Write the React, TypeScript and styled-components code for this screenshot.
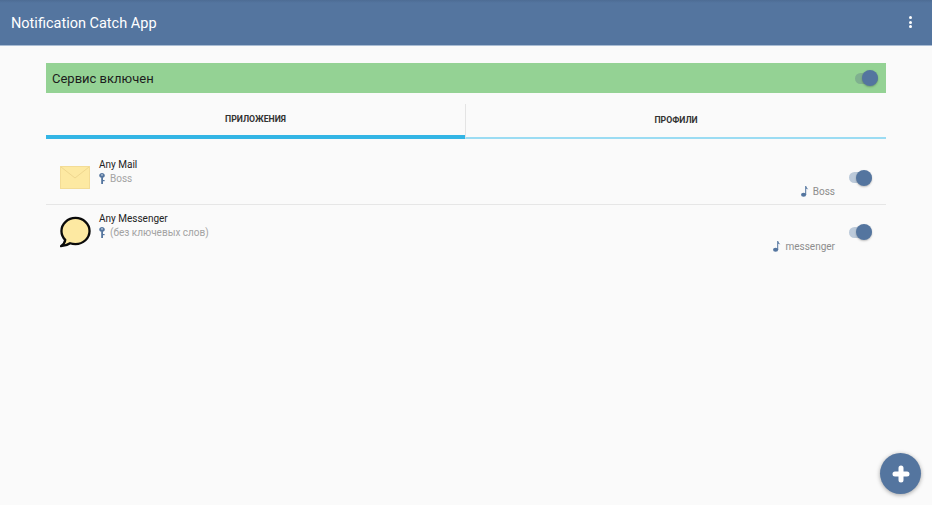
import React from 'react';
import styled, { createGlobalStyle } from 'styled-components';

const GlobalStyle = createGlobalStyle`
    html, body {
        margin: 0;
        padding: 0;
        background: #fafafa;
    }
    body {
        font-family: Roboto, "Noto Sans", sans-serif;
    }
`;

const Page = styled.div`
    position: relative;
    width: 932px;
    height: 505px;
    overflow: hidden;
    background: #fafafa;
`;

const AppBar = styled.header`
    height: 46px;
    box-sizing: border-box;
    padding: 1px 20px 0 11px;
    display: flex;
    align-items: center;
    justify-content: space-between;
    background: linear-gradient(#4d6c94 0, #54759f 3px);
    border-bottom: 1px solid #a9bcd3;
`;

const AppTitle = styled.h1`
    margin: 0;
    font-size: 14.5px;
    font-weight: 400;
    color: #fff;
`;

const MenuDots = styled.div`
    display: flex;
    flex-direction: column;
    gap: 1.5px;
    margin-top: -2px;

    span {
        width: 3px;
        height: 3px;
        border-radius: 50%;
        background: #fff;
    }
`;

const Content = styled.main`
    padding: 17px 46px 0;
`;

const ServiceBanner = styled.div`
    height: 30px;
    box-sizing: border-box;
    padding: 0 8px 0 6px;
    display: flex;
    align-items: center;
    justify-content: space-between;
    background: #94d294;
    font-size: 13px;
    color: #1d1d1d;
`;

const Tabs = styled.nav`
    margin-top: 11px;
    display: flex;
`;

interface TabProps {
    $active?: boolean;
}

const Tab = styled.div<TabProps>`
    flex: ${props => props.$active ? '0 0 419px' : '1'};
    height: 35px;
    box-sizing: border-box;
    padding-bottom: 2px;
    display: flex;
    align-items: center;
    justify-content: center;
    font-size: 8.7px;
    font-weight: 700;
    color: #333;
    border-bottom: ${props => props.$active ? '4px solid #33b5e5' : '2px solid #9bdcf3'};
    border-left: ${props => props.$active ? 'none' : '1px solid #e4e4e4'};
`;

const List = styled.div`
    margin-top: 12px;
`;

const Row = styled.div`
    height: 54px;
    box-sizing: border-box;
    padding: 0 14px;
    display: flex;
    align-items: center;
    gap: 8px;
    border-bottom: 1px solid #e6e6e6;

    &:last-child {
        border-bottom: none;
    }
`;

const IconBox = styled.div`
    width: 31px;
    height: 32px;
    display: flex;
    align-items: center;
    justify-content: flex-start;
`;

const RowText = styled.div`
    flex: 1;
    align-self: flex-start;
    padding-top: 7px;
`;

const RowName = styled.div`
    font-size: 10px;
    line-height: 13px;
    color: #222;
`;

const KeywordLine = styled.div`
    margin-top: 1px;
    display: flex;
    align-items: center;
    gap: 5px;
    font-size: 10px;
    line-height: 13px;
    color: #a3a3a3;
`;

const SoundLine = styled.div`
    align-self: flex-end;
    padding-bottom: 6px;
    margin-right: 6px;
    display: flex;
    align-items: center;
    gap: 4px;
    font-size: 10px;
    line-height: 13px;
    color: #8d8d8d;
`;

interface SwitchProps {
    $track?: string;
}

const Switch = styled.div<SwitchProps>`
    position: relative;
    width: 23px;
    height: 11px;
    border-radius: 6px;
    background: ${props => props.$track ? props.$track : '#bccada'};

    &::after {
        content: '';
        position: absolute;
        right: 0;
        top: -2.5px;
        width: 16px;
        height: 16px;
        border-radius: 50%;
        background: #54759f;
        box-shadow: 0 1px 2px rgba(0, 0, 0, 0.25);
    }
`;

const Fab = styled.button`
    position: absolute;
    left: 880px;
    top: 453px;
    width: 41px;
    height: 41px;
    padding: 0;
    border: none;
    border-radius: 50%;
    background: #54759f;
    box-shadow: 0 1px 4px rgba(0, 0, 0, 0.35);
    display: flex;
    align-items: center;
    justify-content: center;
`;

const MailIcon = () => (
    <svg width="30" height="23" viewBox="0 0 30 23">
        <rect x="0.5" y="0.5" width="29" height="22" fill="#fde9a2" stroke="#f3dc96" />
        <path d="M1 1 L15 12 L29 1" fill="none" stroke="#efd78f" strokeWidth="1" />
    </svg>
);

const BubbleIcon = () => (
    <svg width="32" height="32" viewBox="0 0 32 32">
        <path
            d="M16 1.5 C8 1.5 1.5 7.6 1.5 15 C1.5 18.6 3 21.8 5.4 24.2 C5.2 26.4 4 28.6 1 30.6 C4.8 30.4 8 29.4 10.4 27.6 C12.2 28.2 14 28.5 16 28.5 C24 28.5 30.5 22.4 30.5 15 C30.5 7.6 24 1.5 16 1.5 Z"
            fill="#fde9a2"
            stroke="#0a0a0a"
            strokeWidth="2.4"
            strokeLinejoin="round"
        />
    </svg>
);

const KeyIcon = () => (
    <svg width="6" height="11" viewBox="0 0 6 11">
        <path
            fillRule="evenodd"
            d="M3 0 C4.5 0 5.8 1 5.8 2.4 C5.8 3.5 5 4.3 4 4.6 L4 11 L2.2 11 L2.2 4.6 C1 4.3 0.2 3.5 0.2 2.4 C0.2 1 1.5 0 3 0 Z M3 1.2 C2.5 1.2 2.2 1.5 2.2 1.9 C2.2 2.3 2.5 2.6 3 2.6 C3.5 2.6 3.8 2.3 3.8 1.9 C3.8 1.5 3.5 1.2 3 1.2 Z"
            fill="#54759f"
        />
        <rect x="4" y="7" width="1.6" height="1.2" fill="#54759f" />
    </svg>
);

const NoteIcon = () => (
    <svg width="8" height="11" viewBox="0 0 8 11">
        <ellipse cx="2.6" cy="8.8" rx="2.6" ry="2" fill="#54759f" />
        <path d="M4.2 0 L5.2 0 C5.4 1.6 6.6 2.4 7.4 3.8 C6.8 3.2 6 2.9 5.2 2.8 L5.2 9 L4.2 9 Z" fill="#54759f" />
    </svg>
);

const PlusIcon = () => (
    <svg width="18" height="18" viewBox="0 0 18 18">
        <path d="M9 3 V15 M3 9 H15" stroke="#fff" strokeWidth="5" strokeLinecap="round" />
    </svg>
);

const rows = [
    { name: 'Any Mail', keywords: 'Boss', sound: 'Boss', icon: <MailIcon /> },
    { name: 'Any Messenger', keywords: '(без ключевых слов)', sound: 'messenger', icon: <BubbleIcon /> },
];

export default function App() {
    return (
        <Page>
            <GlobalStyle />
            <AppBar>
                <AppTitle>Notification Catch App</AppTitle>
                <MenuDots>
                    <span />
                    <span />
                    <span />
                </MenuDots>
            </AppBar>
            <Content>
                <ServiceBanner>
                    Сервис включен
                    <Switch $track="#7fb08f" />
                </ServiceBanner>
                <Tabs>
                    <Tab $active>ПРИЛОЖЕНИЯ</Tab>
                    <Tab>ПРОФИЛИ</Tab>
                </Tabs>
                <List>
                    {rows.map(row => (
                        <Row key={row.name}>
                            <IconBox>{row.icon}</IconBox>
                            <RowText>
                                <RowName>{row.name}</RowName>
                                <KeywordLine>
                                    <KeyIcon />
                                    {row.keywords}
                                </KeywordLine>
                            </RowText>
                            <SoundLine>
                                <NoteIcon />
                                {row.sound}
                            </SoundLine>
                            <Switch />
                        </Row>
                    ))}
                </List>
            </Content>
            <Fab aria-label="add">
                <PlusIcon />
            </Fab>
        </Page>
    );
}
